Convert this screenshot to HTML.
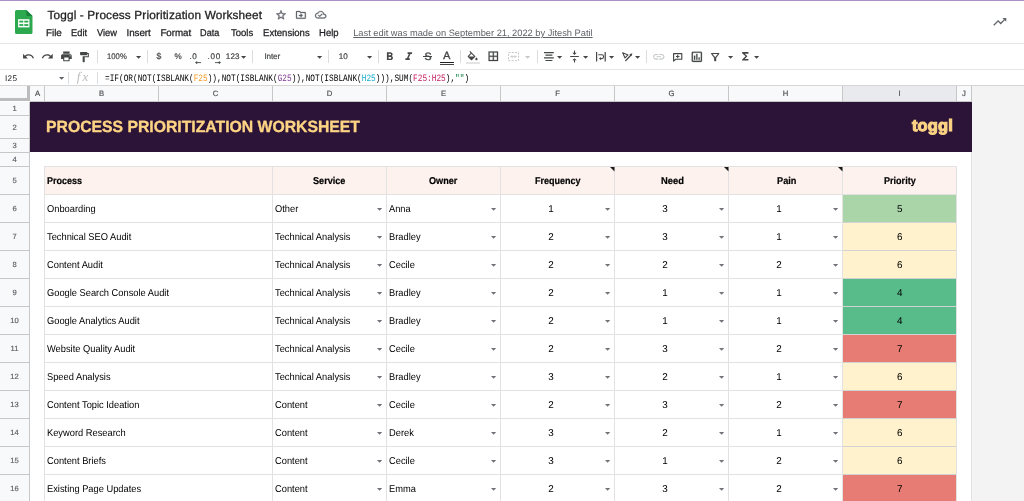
<!DOCTYPE html>
<html><head><meta charset="utf-8"><title>Toggl - Process Prioritization Worksheet</title>
<style>
html,body{margin:0;padding:0}
body{width:1024px;height:501px;overflow:hidden;background:#fff;position:relative;text-rendering:geometricPrecision;font-family:"Liberation Sans",sans-serif;color:#000}
.a{position:absolute}
.t{position:absolute;white-space:nowrap;line-height:1}
.hl{position:absolute;height:1px;background:#e2e2e2}
.vl{position:absolute;width:1px;background:#e2e2e2}
.ch{position:absolute;top:86px;height:15px;font-size:7.7px;color:#50545a;-webkit-text-stroke:0.2px #50545a;text-align:center;line-height:16px}
.rh{position:absolute;left:0;width:29px;font-size:7.6px;color:#5a5e64;-webkit-text-stroke:0.15px #5a5e64;text-align:center}
.c{position:absolute;white-space:nowrap;font-size:9.9px;color:#000;line-height:1;letter-spacing:0px;transform-origin:0 0;transform:scaleX(0.9415)}
.n{text-align:center;transform:none}
.dd{position:absolute;width:0;height:0;border-left:2.6px solid transparent;border-right:2.6px solid transparent;border-top:2.8px solid #444746}
.sep{position:absolute;width:1px;top:50px;height:13px;background:#dadce0}
svg{position:absolute;overflow:visible}
</style></head><body><div id="app" style="position:absolute;left:0;top:0;width:1024px;height:501px;will-change:transform">

<div class="a" style="left:0;top:0;width:1024px;height:1px;background:#a890c5"></div>
<svg style="left:14.6px;top:9.9px" width="17.5" height="24.1" viewBox="0 0 17.5 24.1"><path d="M1.600 0h9.800l6.100 6.100v16.400a1.600 1.600 0 0 1-1.600 1.600H1.600A1.600 1.600 0 0 1 0 22.500V1.600A1.600 1.600 0 0 1 1.600 0z" fill="#2ca94f"/><path d="M11.400 0l6.100 6.100h-4.600a1.500 1.500 0 0 1-1.500-1.500z" fill="#17813a"/><rect x="3.100" y="9.200" width="11.300" height="8.200" fill="#fff"/><rect x="4.300" y="10.700" width="4" height="1.800" fill="#2ca94f"/><rect x="9.300" y="10.700" width="4" height="1.800" fill="#2ca94f"/><rect x="4.300" y="14.100" width="4" height="1.800" fill="#2ca94f"/><rect x="9.300" y="14.100" width="4" height="1.800" fill="#2ca94f"/></svg>
<svg style="left:274.90px;top:9.00px" width="12" height="12" viewBox="0 0 24 24"><path d="M22 9.240l-7.190-.620L12 2 9.190 8.630 2 9.240l5.460 4.730L5.820 21 12 17.270 18.180 21l-1.630-7.030L22 9.240zM12 15.400l-3.760 2.270 1-4.280-3.320-2.880 4.380-.380L12 6.100l1.710 4.040 4.380.380-3.320 2.880 1 4.280L12 15.400z" fill="#5f6368" stroke="#5f6368" stroke-width="0.7"/></svg>
<svg style="left:294.60px;top:9.00px" width="11.8" height="11.8" viewBox="0 0 24 24"><path d="M20 6h-8l-2-2H4c-1.100 0-2 .900-2 2v12c0 1.100.900 2 2 2h16c1.100 0 2-.900 2-2V8c0-1.100-.900-2-2-2zm0 12H4V6h5.170l2 2H20v10zm-7.840-4H8v-2h4.160l-1.590-1.590L11.990 9 16 13.010 11.990 17l-1.410-1.410L12.160 14z" fill="#5f6368" stroke="#5f6368" stroke-width="0.5"/></svg>
<svg style="left:315.20px;top:9.20px" width="11.4" height="11.4" viewBox="0 0 24 24"><path d="M19.350 10.040C18.670 6.590 15.640 4 12 4 9.110 4 6.600 5.640 5.350 8.040 2.340 8.360 0 10.910 0 14c0 3.310 2.690 6 6 6h13c2.760 0 5-2.240 5-5 0-2.640-2.050-4.780-4.650-4.960zM19 18H6c-2.210 0-4-1.790-4-4 0-2.050 1.530-3.760 3.560-3.970l1.070-.110.500-.950C8.080 7.140 9.940 6 12 6c2.620 0 4.880 1.860 5.390 4.430l.300 1.500 1.530.110c1.560.100 2.780 1.410 2.780 2.960 0 1.650-1.350 3-3 3zm-9-3.820l-2.090-2.090L6.500 13.500 10 17l6.010-6.010-1.410-1.410z" fill="#5f6368" stroke="#5f6368" stroke-width="0.5"/></svg>
<svg style="left:991.70px;top:13.95px" width="15.6" height="15.6" viewBox="0 0 24 24"><path d="M16 6l2.290 2.290-4.880 4.880-4-4L2 16.590 3.410 18l6-6 4 4 6.300-6.290L22 12V6z" fill="#5f6368" /></svg>
<div class="hl" style="left:0;top:43px;width:1024px;background:#e4e6e9"></div>
<div class="hl" style="left:0;top:69px;width:1024px;background:#e4e6e9"></div>
<div class="hl" style="left:0;top:85px;width:1024px;background:#d6d6d6"></div>
<svg style="left:21.90px;top:50.20px" width="12.8" height="12.8" viewBox="0 0 24 24"><path d="M12.500 8c-2.650 0-5.050.990-6.900 2.600L2 7v9h9l-3.620-3.620c1.390-1.160 3.160-1.880 5.120-1.880 3.540 0 6.550 2.310 7.600 5.500l2.370-.780C21.080 11.030 17.150 8 12.500 8z" fill="#444746" /></svg>
<svg style="left:41.40px;top:50.20px" width="12.8" height="12.8" viewBox="0 0 24 24"><path d="M18.400 10.600C16.550 8.990 14.150 8 11.500 8c-4.650 0-8.580 3.030-9.960 7.220L3.900 16c1.050-3.190 4.050-5.500 7.600-5.500 1.950 0 3.730.720 5.120 1.880L13 16h9V7l-3.600 3.600z" fill="#444746" /></svg>
<svg style="left:59.50px;top:50.10px" width="12.8" height="12.8" viewBox="0 0 24 24"><path d="M19 8H5c-1.660 0-3 1.340-3 3v6h4v4h12v-4h4v-6c0-1.660-1.340-3-3-3zm-3 11H8v-5h8v5zm3-7c-.550 0-1-.450-1-1s.450-1 1-1 1 .450 1 1-.450 1-1 1zm-1-9H6v4h12V3z" fill="#444746" /></svg>
<svg style="left:78.40px;top:50.50px" width="12.4" height="12.4" viewBox="0 0 24 24"><path d="M18 4V3c0-.550-.450-1-1-1H5c-.550 0-1 .450-1 1v4c0 .550.450 1 1 1h12c.550 0 1-.450 1-1V6h1v4H9v11c0 .550.450 1 1 1h2c.550 0 1-.450 1-1v-9h8V4h-3z" fill="#444746" /></svg>
<svg style="left:383.20px;top:50.40px" width="13.4" height="13.4" viewBox="0 0 24 24"><path d="M15.600 10.790c.970-.670 1.650-1.770 1.650-2.790 0-2.260-1.750-4-4-4H7v14h7.040c2.090 0 3.710-1.700 3.710-3.790 0-1.520-.860-2.820-2.150-3.420zM10 6.500h3c.830 0 1.500.670 1.500 1.500s-.670 1.500-1.500 1.500h-3v-3zm3.500 9H10v-3h3.500c.830 0 1.500.670 1.500 1.500s-.670 1.500-1.500 1.500z" fill="#444746" /></svg>
<svg style="left:402.15px;top:50.40px" width="13.4" height="13.4" viewBox="0 0 24 24"><path d="M10 4v3h2.210l-3.420 8H6v3h8v-3h-2.210l3.420-8H18V4z" fill="#444746" /></svg>
<div class="a" style="left:422.8px;top:56.3px;width:9.4px;height:1.1px;background:#444746"></div>
<div class="a" style="left:440.1px;top:62px;width:14.2px;height:1px;background:#222"></div>
<div class="a" style="left:440.1px;top:63.8px;width:14.2px;height:0.9px;background:#444"></div>
<svg style="left:466.40px;top:50.60px" width="13.2" height="13.2" viewBox="0 0 24 24"><path d="M16.560 8.940L7.620 0 6.210 1.410l2.380 2.380-5.150 5.150c-.590.590-.590 1.540 0 2.120l5.500 5.500c.290.290.680.440 1.060.440s.770-.150 1.060-.440l5.500-5.500c.590-.580.590-1.530 0-2.120zM5.210 10L10 5.210 14.790 10H5.210zM19 11.500s-2 2.170-2 3.500c0 1.100.900 2 2 2s2-.900 2-2c0-1.330-2-3.500-2-3.500z" fill="#444746" /></svg>
<div class="a" style="left:466.2px;top:62.3px;width:13.6px;height:1.6px;background:#fff;border:0.6px solid #e4e4e4;box-sizing:border-box"></div>
<svg style="left:486.60px;top:50.20px" width="12.6" height="12.6" viewBox="0 0 24 24"><path d="M3 3v18h18V3H3zm8 16H5v-6h6v6zm0-8H5V5h6v6zm8 8h-6v-6h6v6zm0-8h-6V5h6v6z" fill="#444746" stroke="#444746" stroke-width="0.5"/></svg>
<svg style="left:507.5px;top:52.1px" width="11" height="9.2" viewBox="0 0 11 9.2"><path d="M0.500 0.500h10v8.200h-10z" fill="none" stroke="#c4c7c5" stroke-width="1" stroke-dasharray="2 1.300"/><path d="M2.200 4.600h2.600M8.800 4.600H6.200M3.800 3.300l1.300 1.300-1.300 1.300M7.200 3.300L5.900 4.600l1.300 1.300" fill="none" stroke="#c4c7c5" stroke-width="0.9"/></svg>
<svg style="left:543.5px;top:52.1px" width="9.8" height="9.2" viewBox="0 0 9.8 9.200"><path d="M0 0.600h9.800M1.400 3.200h7M0 5.900h9.800M1.400 8.500h7" stroke="#444746" stroke-width="1.150" fill="none"/></svg>
<svg style="left:568.00px;top:50.00px" width="13" height="13" viewBox="0 0 24 24"><path d="M8 19h3v4h2v-4h3l-4-4-4 4zm8-14h-3V1h-2v4H8l4 4 4-4zM4 11v2h16v-2H4z" fill="#444746" /></svg>
<svg style="left:595.6px;top:51.8px" width="9.800" height="9.500" viewBox="0 0 9.800 9.500"><path d="M0.600 0v9.500M9.200 0v9.500" stroke="#444746" stroke-width="1.200" fill="none"/><path d="M2.300 2.800h3.400a1.900 1.900 0 0 1 0 3.800H4.200" stroke="#444746" stroke-width="1.100" fill="none"/><path d="M4.900 4.900L2.900 6.600l2 1.700z" fill="#444746"/></svg>
<svg style="left:621.5px;top:51.8px" width="10.600" height="9.200" viewBox="0 0 10.600 9.200"><path d="M0.700 0.800l5.300 2.100-3 3.100z" fill="none" stroke="#444746" stroke-width="1.100" stroke-linejoin="round"/><path d="M3.400 9l5.600-6" stroke="#444746" stroke-width="1.200" fill="none"/><path d="M10.400 1.300L7.300 2.200l2.200 2.100z" fill="#444746"/></svg>
<svg style="left:652.20px;top:50.10px" width="13.6" height="13.6" viewBox="0 0 24 24"><path d="M3.900 12c0-1.710 1.390-3.100 3.100-3.100h4V7H7c-2.760 0-5 2.240-5 5s2.240 5 5 5h4v-1.900H7c-1.710 0-3.100-1.390-3.100-3.100zM8 13h8v-2H8v2zm9-6h-4v1.900h4c1.710 0 3.100 1.390 3.100 3.100s-1.390 3.100-3.100 3.100h-4V17h4c2.760 0 5-2.240 5-5s-2.240-5-5-5z" fill="#c4c7c5" /></svg>
<svg style="left:673px;top:52.6px" width="9.400" height="8.500" viewBox="0 0 9.400 8.500"><path d="M0.600 0.600h8.200v5.700H2.700L0.600 8.100z" fill="none" stroke="#444746" stroke-width="1.150" stroke-linejoin="round"/><path d="M4.700 1.700v3.500M2.950 3.450h3.500" stroke="#444746" stroke-width="1.050" fill="none"/></svg>
<svg style="left:689.60px;top:49.70px" width="13.7" height="13.7" viewBox="0 0 24 24"><path d="M9 17H7v-7h2v7zm4 0h-2V7h2v10zm4 0h-2v-4h2v4zm2 2H5V5h14v14zm0-16H5c-1.100 0-2 .900-2 2v14c0 1.100.900 2 2 2h14c1.100 0 2-.900 2-2V5c0-1.100-.900-2-2-2z" fill="#444746" stroke="#444746" stroke-width="0.4"/></svg>
<svg style="left:709.20px;top:50.50px" width="12.4" height="12.4" viewBox="0 0 24 24"><path d="M7 6h10l-5.010 6.300L7 6zm-2.750-.390C6.270 8.200 10 13 10 13v6c0 .550.450 1 1 1h2c.550 0 1-.450 1-1v-6s3.720-4.800 5.740-7.390c.510-.660.040-1.610-.790-1.610H5.040c-.830 0-1.300.950-.790 1.610z" fill="#444746" /></svg>
<svg style="left:739.00px;top:50.45px" width="12.6" height="12.6" viewBox="0 0 24 24"><path d="M18 4H6v2l6.500 6L6 18v2h12v-3h-7l5-5-5-5h7z" fill="#444746" /></svg>
<div class="sep" style="left:97px"></div>
<div class="sep" style="left:146.6px"></div>
<div class="sep" style="left:252.4px"></div>
<div class="sep" style="left:328.4px"></div>
<div class="sep" style="left:377.5px"></div>
<div class="sep" style="left:460px"></div>
<div class="sep" style="left:536.5px"></div>
<div class="sep" style="left:646.4px"></div>
<svg style="left:135.6px;top:55.5px" width="5.200" height="2.700" viewBox="0 0 5.200 2.700"><path d="M0 0h5.200L2.600 2.700z" fill="#444746"/></svg>
<svg style="left:240.6px;top:55.5px" width="5.200" height="2.700" viewBox="0 0 5.200 2.700"><path d="M0 0h5.200L2.600 2.700z" fill="#444746"/></svg>
<svg style="left:317.0px;top:55.5px" width="5.200" height="2.700" viewBox="0 0 5.200 2.700"><path d="M0 0h5.200L2.600 2.700z" fill="#444746"/></svg>
<svg style="left:366.8px;top:55.5px" width="5.200" height="2.700" viewBox="0 0 5.200 2.700"><path d="M0 0h5.200L2.600 2.700z" fill="#444746"/></svg>
<svg style="left:557.0px;top:55.5px" width="5.200" height="2.700" viewBox="0 0 5.200 2.700"><path d="M0 0h5.200L2.600 2.700z" fill="#444746"/></svg>
<svg style="left:583.3px;top:55.5px" width="5.200" height="2.700" viewBox="0 0 5.200 2.700"><path d="M0 0h5.200L2.600 2.700z" fill="#444746"/></svg>
<svg style="left:608.9px;top:55.5px" width="5.200" height="2.700" viewBox="0 0 5.200 2.700"><path d="M0 0h5.200L2.600 2.700z" fill="#444746"/></svg>
<svg style="left:635.3px;top:55.5px" width="5.200" height="2.700" viewBox="0 0 5.200 2.700"><path d="M0 0h5.200L2.600 2.700z" fill="#444746"/></svg>
<svg style="left:727.9px;top:55.5px" width="5.200" height="2.700" viewBox="0 0 5.200 2.700"><path d="M0 0h5.200L2.600 2.700z" fill="#444746"/></svg>
<svg style="left:754.0px;top:55.5px" width="5.200" height="2.700" viewBox="0 0 5.200 2.700"><path d="M0 0h5.200L2.600 2.700z" fill="#444746"/></svg>
<svg style="left:525.1px;top:55.5px" width="5.200" height="2.700" viewBox="0 0 5.200 2.700"><path d="M0 0h5.200L2.600 2.700z" fill="#c4c7c5"/></svg>
<svg style="left:195.400px;top:60.6px" width="6" height="3.200" viewBox="0 0 6 3.200"><path d="M6 1.600H1.400" stroke="#444746" stroke-width="0.9"/><path d="M0 1.600L2.200 0v3.200z" fill="#444746"/></svg>
<svg style="left:215px;top:60.6px" width="6" height="3.200" viewBox="0 0 6 3.200"><path d="M0 1.600h4.600" stroke="#444746" stroke-width="0.9"/><path d="M6 1.600L3.800 0v3.200z" fill="#444746"/></svg>
<svg style="left:58.9px;top:77.4px" width="5.200" height="2.700" viewBox="0 0 5.200 2.700"><path d="M0 0h5.200L2.600 2.700z" fill="#5f6368"/></svg>
<div class="vl" style="left:68px;top:72px;height:12px;background:#dadce0"></div>
<div class="vl" style="left:97px;top:72px;height:12px;background:#dadce0"></div>
<div class="t" style="left:104.7px;top:74px;font-size:9.8px;color:#000;font-family:'Liberation Mono',monospace;transform-origin:0 0;transform:scaleX(0.7939)">=IF(OR(NOT(ISBLANK(<span style="color:#f7981d">F25</span>)),NOT(ISBLANK(<span style="color:#7e3794">G25</span>)),NOT(ISBLANK(<span style="color:#11a9cc">H25</span>))),SUM(<span style="color:#c2185b">F25:H25</span>),<span style="color:#0b8043">""</span>)</div>
<div class="a" style="left:972px;top:86px;width:52px;height:415px;background:#f3f3f3"></div>
<div class="a" style="left:0;top:86px;width:972px;height:15px;background:#f8f9fa"></div>
<div class="ch" style="left:31px;width:13px;">A</div>
<div class="vl" style="left:44px;top:86px;height:15px;background:#c7c7c7"></div>
<div class="ch" style="left:45px;width:113px;">B</div>
<div class="vl" style="left:158px;top:86px;height:15px;background:#c7c7c7"></div>
<div class="ch" style="left:159px;width:113px;">C</div>
<div class="vl" style="left:272px;top:86px;height:15px;background:#c7c7c7"></div>
<div class="ch" style="left:273px;width:113px;">D</div>
<div class="vl" style="left:386px;top:86px;height:15px;background:#c7c7c7"></div>
<div class="ch" style="left:387px;width:113px;">E</div>
<div class="vl" style="left:500px;top:86px;height:15px;background:#c7c7c7"></div>
<div class="ch" style="left:501px;width:113px;">F</div>
<div class="vl" style="left:614px;top:86px;height:15px;background:#c7c7c7"></div>
<div class="ch" style="left:615px;width:113px;">G</div>
<div class="vl" style="left:728px;top:86px;height:15px;background:#c7c7c7"></div>
<div class="ch" style="left:729px;width:113px;">H</div>
<div class="vl" style="left:842px;top:86px;height:15px;background:#c7c7c7"></div>
<div class="ch" style="left:843px;width:113px;background:#e8eaed;">I</div>
<div class="vl" style="left:956px;top:86px;height:15px;background:#c7c7c7"></div>
<div class="ch" style="left:957px;width:14px;">J</div>
<div class="vl" style="left:971px;top:86px;height:15px;background:#c7c7c7"></div>
<div class="hl" style="left:30px;top:101px;width:942px;background:#c7c7c7"></div>
<div class="a" style="left:0;top:102px;width:29px;height:399px;background:#f8f9fa"></div>
<div class="vl" style="left:29px;top:102px;height:399px;background:#c7c7c7"></div>
<div class="rh" style="top:102px;height:13px;line-height:14px">1</div>
<div class="hl" style="left:0;top:115px;width:29px;background:#c7c7c7"></div>
<div class="rh" style="top:116px;height:22px;line-height:23px">2</div>
<div class="hl" style="left:0;top:138px;width:29px;background:#c7c7c7"></div>
<div class="rh" style="top:139px;height:13px;line-height:14px">3</div>
<div class="hl" style="left:0;top:152px;width:29px;background:#c7c7c7"></div>
<div class="rh" style="top:153px;height:13px;line-height:14px">4</div>
<div class="hl" style="left:0;top:166px;width:29px;background:#c7c7c7"></div>
<div class="rh" style="top:167px;height:27px;line-height:28px">5</div>
<div class="hl" style="left:0;top:194px;width:29px;background:#c7c7c7"></div>
<div class="rh" style="top:195px;height:27px;line-height:28px">6</div>
<div class="hl" style="left:0;top:222px;width:29px;background:#c7c7c7"></div>
<div class="rh" style="top:223px;height:27px;line-height:28px">7</div>
<div class="hl" style="left:0;top:250px;width:29px;background:#c7c7c7"></div>
<div class="rh" style="top:251px;height:27px;line-height:28px">8</div>
<div class="hl" style="left:0;top:278px;width:29px;background:#c7c7c7"></div>
<div class="rh" style="top:279px;height:27px;line-height:28px">9</div>
<div class="hl" style="left:0;top:306px;width:29px;background:#c7c7c7"></div>
<div class="rh" style="top:307px;height:27px;line-height:28px">10</div>
<div class="hl" style="left:0;top:334px;width:29px;background:#c7c7c7"></div>
<div class="rh" style="top:335px;height:27px;line-height:28px">11</div>
<div class="hl" style="left:0;top:362px;width:29px;background:#c7c7c7"></div>
<div class="rh" style="top:363px;height:27px;line-height:28px">12</div>
<div class="hl" style="left:0;top:390px;width:29px;background:#c7c7c7"></div>
<div class="rh" style="top:391px;height:27px;line-height:28px">13</div>
<div class="hl" style="left:0;top:418px;width:29px;background:#c7c7c7"></div>
<div class="rh" style="top:419px;height:27px;line-height:28px">14</div>
<div class="hl" style="left:0;top:446px;width:29px;background:#c7c7c7"></div>
<div class="rh" style="top:447px;height:27px;line-height:28px">15</div>
<div class="hl" style="left:0;top:474px;width:29px;background:#c7c7c7"></div>
<div class="rh" style="top:475px;height:27px;line-height:28px">16</div>
<div class="hl" style="left:0;top:502px;width:29px;background:#c7c7c7"></div>
<div class="a" style="left:27px;top:86px;width:3px;height:15px;background:#bcbcbc"></div>
<div class="a" style="left:0;top:98px;width:30px;height:3px;background:#bcbcbc"></div>
<div class="a" style="left:30px;top:102px;width:942px;height:50px;background:#2c1338"></div>
<div class="vl" style="left:971px;top:152px;height:349px;background:#e2e2e2"></div>
<div class="a" style="left:45px;top:167px;width:912px;height:27px;background:#fef2ee"></div>
<div class="a" style="left:843px;top:195px;width:113px;height:28px;background:#a9d5a9"></div>
<div class="a" style="left:843px;top:223px;width:113px;height:28px;background:#fff2cc"></div>
<div class="a" style="left:843px;top:251px;width:113px;height:28px;background:#fff2cc"></div>
<div class="a" style="left:843px;top:279px;width:113px;height:28px;background:#57bb8a"></div>
<div class="a" style="left:843px;top:307px;width:113px;height:28px;background:#57bb8a"></div>
<div class="a" style="left:843px;top:335px;width:113px;height:28px;background:#e67c73"></div>
<div class="a" style="left:843px;top:363px;width:113px;height:28px;background:#fff2cc"></div>
<div class="a" style="left:843px;top:391px;width:113px;height:28px;background:#e67c73"></div>
<div class="a" style="left:843px;top:419px;width:113px;height:28px;background:#fff2cc"></div>
<div class="a" style="left:843px;top:447px;width:113px;height:28px;background:#fff2cc"></div>
<div class="a" style="left:843px;top:475px;width:113px;height:28px;background:#e67c73"></div>
<div class="hl" style="left:44px;top:166px;width:913px"></div>
<div class="hl" style="left:44px;top:194px;width:913px"></div>
<div class="hl" style="left:44px;top:222px;width:913px"></div>
<div class="hl" style="left:44px;top:250px;width:913px"></div>
<div class="hl" style="left:44px;top:278px;width:913px"></div>
<div class="hl" style="left:44px;top:306px;width:913px"></div>
<div class="hl" style="left:44px;top:334px;width:913px"></div>
<div class="hl" style="left:44px;top:362px;width:913px"></div>
<div class="hl" style="left:44px;top:390px;width:913px"></div>
<div class="hl" style="left:44px;top:418px;width:913px"></div>
<div class="hl" style="left:44px;top:446px;width:913px"></div>
<div class="hl" style="left:44px;top:474px;width:913px"></div>
<div class="vl" style="left:44px;top:166px;height:335px"></div>
<div class="vl" style="left:272px;top:166px;height:335px"></div>
<div class="vl" style="left:386px;top:166px;height:335px"></div>
<div class="vl" style="left:500px;top:166px;height:335px"></div>
<div class="vl" style="left:614px;top:166px;height:335px"></div>
<div class="vl" style="left:728px;top:166px;height:335px"></div>
<div class="vl" style="left:842px;top:166px;height:335px"></div>
<div class="vl" style="left:956px;top:166px;height:335px"></div>
<div class="hl" style="left:843px;top:222px;width:113px;background:rgba(0,0,0,0.07)"></div>
<div class="hl" style="left:843px;top:250px;width:113px;background:rgba(0,0,0,0.07)"></div>
<div class="hl" style="left:843px;top:278px;width:113px;background:rgba(0,0,0,0.07)"></div>
<div class="hl" style="left:843px;top:306px;width:113px;background:rgba(0,0,0,0.07)"></div>
<div class="hl" style="left:843px;top:334px;width:113px;background:rgba(0,0,0,0.07)"></div>
<div class="hl" style="left:843px;top:362px;width:113px;background:rgba(0,0,0,0.07)"></div>
<div class="hl" style="left:843px;top:390px;width:113px;background:rgba(0,0,0,0.07)"></div>
<div class="hl" style="left:843px;top:418px;width:113px;background:rgba(0,0,0,0.07)"></div>
<div class="hl" style="left:843px;top:446px;width:113px;background:rgba(0,0,0,0.07)"></div>
<div class="hl" style="left:843px;top:474px;width:113px;background:rgba(0,0,0,0.07)"></div>
<svg style="left:609.5px;top:166.5px" width="4.500" height="4.500"><path d="M0 0h4.500v4.500z" fill="#1a1a1a"/></svg>
<svg style="left:723.5px;top:166.5px" width="4.500" height="4.500"><path d="M0 0h4.500v4.500z" fill="#1a1a1a"/></svg>
<svg style="left:837.5px;top:166.5px" width="4.500" height="4.500"><path d="M0 0h4.500v4.500z" fill="#1a1a1a"/></svg>
<div class="t" style="left:47.50px;top:10.00px;font-size:11.8px;letter-spacing:0.141px;color:#1f1f1f;-webkit-text-stroke:0.3px currentColor;">Toggl - Process Prioritization Worksheet</div>
<div class="t" style="left:46.00px;top:29.00px;font-size:9.8px;color:#202124;-webkit-text-stroke:0.25px currentColor;">File</div>
<div class="t" style="left:70.70px;top:29.00px;font-size:9.8px;color:#202124;transform-origin:1.00px 0;transform:scaleX(0.9500);-webkit-text-stroke:0.25px currentColor;">Edit</div>
<div class="t" style="left:97.00px;top:29.00px;font-size:9.8px;color:#202124;transform-origin:0.00px 0;transform:scaleX(0.9476);-webkit-text-stroke:0.25px currentColor;">View</div>
<div class="t" style="left:126.50px;top:29.00px;font-size:9.8px;letter-spacing:-0.06px;color:#202124;-webkit-text-stroke:0.25px currentColor;">Insert</div>
<div class="t" style="left:160.40px;top:29.00px;font-size:9.8px;letter-spacing:-0.04px;color:#202124;-webkit-text-stroke:0.25px currentColor;">Format</div>
<div class="t" style="left:200.40px;top:29.00px;font-size:9.8px;color:#202124;transform-origin:1.00px 0;transform:scaleX(0.9300);-webkit-text-stroke:0.25px currentColor;">Data</div>
<div class="t" style="left:231.00px;top:29.00px;font-size:9.8px;color:#202124;transform-origin:0.00px 0;transform:scaleX(0.9696);-webkit-text-stroke:0.25px currentColor;">Tools</div>
<div class="t" style="left:262.75px;top:29.00px;font-size:9.8px;color:#202124;transform-origin:1.00px 0;transform:scaleX(0.9734);-webkit-text-stroke:0.25px currentColor;">Extensions</div>
<div class="t" style="left:318.70px;top:29.00px;font-size:9.8px;color:#202124;transform-origin:1.00px 0;transform:scaleX(0.9684);-webkit-text-stroke:0.25px currentColor;">Help</div>
<div class="t" style="left:353.20px;top:29.00px;font-size:9.3px;letter-spacing:-0.007px;color:#5f6368;text-decoration:underline;text-underline-offset:0.5px;text-decoration-thickness:1px;">Last edit was made on September 21, 2022 by Jitesh Patil</div>
<div class="t" style="left:106.90px;top:53.00px;font-size:8.1px;color:#444746;transform-origin:1.00px 0;transform:scaleX(0.9500);-webkit-text-stroke:0.2px currentColor;">100%</div>
<div class="t" style="left:156.60px;top:52.00px;font-size:8.7px;color:#444746;-webkit-text-stroke:0.2px currentColor;">$</div>
<div class="t" style="left:174.50px;top:53.00px;font-size:8.1px;color:#444746;-webkit-text-stroke:0.2px currentColor;">%</div>
<div class="t" style="left:189.50px;top:53.00px;font-size:8.1px;letter-spacing:0.5px;color:#444746;-webkit-text-stroke:0.2px currentColor;">.0</div>
<div class="t" style="left:207.60px;top:53.00px;font-size:8.1px;letter-spacing:0.65px;color:#444746;-webkit-text-stroke:0.2px currentColor;">.00</div>
<div class="t" style="left:225.75px;top:53.00px;font-size:8.1px;letter-spacing:0.125px;color:#444746;-webkit-text-stroke:0.2px currentColor;">123</div>
<div class="t" style="left:264.40px;top:53.00px;font-size:8.1px;letter-spacing:-0.1px;color:#444746;-webkit-text-stroke:0.2px currentColor;">Inter</div>
<div class="t" style="left:338.75px;top:53.00px;font-size:8.1px;color:#444746;-webkit-text-stroke:0.2px currentColor;">10</div>
<div class="t" style="left:424.60px;top:52.00px;font-size:10.6px;color:#444746;-webkit-text-stroke:0.4px currentColor;">S</div>
<div class="t" style="left:443.25px;top:51.00px;font-size:10.6px;color:#444746;-webkit-text-stroke:0.4px currentColor;">A</div>
<div class="t" style="left:4.90px;top:75.00px;font-size:8.2px;letter-spacing:0.35px;color:#202124;">I25</div>
<div class="t" style="left:76.80px;top:70.00px;font-size:13px;letter-spacing:2.1px;color:#bdbdbd;font-family:'Liberation Serif',serif;font-style:italic;">fx</div>
<div class="t" style="left:46.20px;top:119.00px;font-size:16.2px;color:#fdd484;font-weight:bold;transform-origin:1.00px 0;transform:scaleX(0.9733);-webkit-text-stroke:0.35px #fdd484;">PROCESS PRIORITIZATION WORKSHEET</div>
<div class="t" style="left:911.90px;top:118.00px;font-size:16.5px;letter-spacing:0.15px;color:#fdd484;font-weight:bold;-webkit-text-stroke:1.1px #fdd484;">toggl</div>
<div class="t" style="left:47.00px;top:177.00px;font-size:9.9px;color:#000;font-weight:bold;transform-origin:0.00px 0;transform:scaleX(0.9132);-webkit-text-stroke:0.2px #000;">Process</div>
<div class="t" style="left:313.40px;top:177.00px;font-size:9.9px;color:#000;font-weight:bold;transform-origin:0.00px 0;transform:scaleX(0.9229);-webkit-text-stroke:0.2px #000;">Service</div>
<div class="t" style="left:429.40px;top:177.00px;font-size:9.9px;color:#000;font-weight:bold;transform-origin:0.00px 0;transform:scaleX(0.9226);-webkit-text-stroke:0.2px #000;">Owner</div>
<div class="t" style="left:534.70px;top:177.00px;font-size:9.9px;color:#000;font-weight:bold;transform-origin:0.00px 0;transform:scaleX(0.9140);-webkit-text-stroke:0.2px #000;">Frequency</div>
<div class="t" style="left:660.50px;top:177.00px;font-size:9.9px;color:#000;font-weight:bold;transform-origin:0.00px 0;transform:scaleX(0.9500);-webkit-text-stroke:0.2px #000;">Need</div>
<div class="t" style="left:776.70px;top:177.00px;font-size:9.9px;color:#000;font-weight:bold;transform-origin:0.00px 0;transform:scaleX(0.9300);-webkit-text-stroke:0.2px #000;">Pain</div>
<div class="t" style="left:884.30px;top:177.00px;font-size:9.9px;color:#000;font-weight:bold;transform-origin:0.00px 0;transform:scaleX(0.9176);-webkit-text-stroke:0.2px #000;">Priority</div>
<div class="c" style="left:47.00px;top:205px">Onboarding</div>
<div class="c" style="left:275.20px;top:205px">Other</div>
<div class="c" style="left:388.90px;top:205px">Anna</div>
<div class="c n" style="left:531px;width:40px;top:205px;letter-spacing:0">1</div>
<div class="c n" style="left:645px;width:40px;top:205px;letter-spacing:0">3</div>
<div class="c n" style="left:759px;width:40px;top:205px;letter-spacing:0">1</div>
<div class="c n" style="left:879.8px;width:40px;top:205px;letter-spacing:0">5</div>
<svg style="left:376.9px;top:207.6px" width="5.200" height="2.700" viewBox="0 0 5.200 2.700"><path d="M0 0h5.200L2.600 2.700z" fill="#6f7378"/></svg>
<svg style="left:490.9px;top:207.6px" width="5.200" height="2.700" viewBox="0 0 5.200 2.700"><path d="M0 0h5.200L2.600 2.700z" fill="#6f7378"/></svg>
<svg style="left:604.9px;top:207.6px" width="5.200" height="2.700" viewBox="0 0 5.200 2.700"><path d="M0 0h5.200L2.600 2.700z" fill="#6f7378"/></svg>
<svg style="left:718.9px;top:207.6px" width="5.200" height="2.700" viewBox="0 0 5.200 2.700"><path d="M0 0h5.200L2.600 2.700z" fill="#6f7378"/></svg>
<svg style="left:832.9px;top:207.6px" width="5.200" height="2.700" viewBox="0 0 5.200 2.700"><path d="M0 0h5.200L2.600 2.700z" fill="#6f7378"/></svg>
<div class="c" style="left:47.00px;top:233px">Technical SEO Audit</div>
<div class="c" style="left:275.20px;top:233px">Technical Analysis</div>
<div class="c" style="left:388.90px;top:233px">Bradley</div>
<div class="c n" style="left:531px;width:40px;top:233px;letter-spacing:0">2</div>
<div class="c n" style="left:645px;width:40px;top:233px;letter-spacing:0">3</div>
<div class="c n" style="left:759px;width:40px;top:233px;letter-spacing:0">1</div>
<div class="c n" style="left:879.8px;width:40px;top:233px;letter-spacing:0">6</div>
<svg style="left:376.9px;top:235.6px" width="5.200" height="2.700" viewBox="0 0 5.200 2.700"><path d="M0 0h5.200L2.600 2.700z" fill="#6f7378"/></svg>
<svg style="left:490.9px;top:235.6px" width="5.200" height="2.700" viewBox="0 0 5.200 2.700"><path d="M0 0h5.200L2.600 2.700z" fill="#6f7378"/></svg>
<svg style="left:604.9px;top:235.6px" width="5.200" height="2.700" viewBox="0 0 5.200 2.700"><path d="M0 0h5.200L2.600 2.700z" fill="#6f7378"/></svg>
<svg style="left:718.9px;top:235.6px" width="5.200" height="2.700" viewBox="0 0 5.200 2.700"><path d="M0 0h5.200L2.600 2.700z" fill="#6f7378"/></svg>
<svg style="left:832.9px;top:235.6px" width="5.200" height="2.700" viewBox="0 0 5.200 2.700"><path d="M0 0h5.200L2.600 2.700z" fill="#6f7378"/></svg>
<div class="c" style="left:47.00px;top:261px">Content Audit</div>
<div class="c" style="left:275.20px;top:261px">Technical Analysis</div>
<div class="c" style="left:388.90px;top:261px">Cecile</div>
<div class="c n" style="left:531px;width:40px;top:261px;letter-spacing:0">2</div>
<div class="c n" style="left:645px;width:40px;top:261px;letter-spacing:0">2</div>
<div class="c n" style="left:759px;width:40px;top:261px;letter-spacing:0">2</div>
<div class="c n" style="left:879.8px;width:40px;top:261px;letter-spacing:0">6</div>
<svg style="left:376.9px;top:263.6px" width="5.200" height="2.700" viewBox="0 0 5.200 2.700"><path d="M0 0h5.200L2.600 2.700z" fill="#6f7378"/></svg>
<svg style="left:490.9px;top:263.6px" width="5.200" height="2.700" viewBox="0 0 5.200 2.700"><path d="M0 0h5.200L2.600 2.700z" fill="#6f7378"/></svg>
<svg style="left:604.9px;top:263.6px" width="5.200" height="2.700" viewBox="0 0 5.200 2.700"><path d="M0 0h5.200L2.600 2.700z" fill="#6f7378"/></svg>
<svg style="left:718.9px;top:263.6px" width="5.200" height="2.700" viewBox="0 0 5.200 2.700"><path d="M0 0h5.200L2.600 2.700z" fill="#6f7378"/></svg>
<svg style="left:832.9px;top:263.6px" width="5.200" height="2.700" viewBox="0 0 5.200 2.700"><path d="M0 0h5.200L2.600 2.700z" fill="#6f7378"/></svg>
<div class="c" style="left:47.00px;top:289px">Google Search Console Audit</div>
<div class="c" style="left:275.20px;top:289px">Technical Analysis</div>
<div class="c" style="left:388.90px;top:289px">Bradley</div>
<div class="c n" style="left:531px;width:40px;top:289px;letter-spacing:0">2</div>
<div class="c n" style="left:645px;width:40px;top:289px;letter-spacing:0">1</div>
<div class="c n" style="left:759px;width:40px;top:289px;letter-spacing:0">1</div>
<div class="c n" style="left:879.8px;width:40px;top:289px;letter-spacing:0">4</div>
<svg style="left:376.9px;top:291.6px" width="5.200" height="2.700" viewBox="0 0 5.200 2.700"><path d="M0 0h5.200L2.600 2.700z" fill="#6f7378"/></svg>
<svg style="left:490.9px;top:291.6px" width="5.200" height="2.700" viewBox="0 0 5.200 2.700"><path d="M0 0h5.200L2.600 2.700z" fill="#6f7378"/></svg>
<svg style="left:604.9px;top:291.6px" width="5.200" height="2.700" viewBox="0 0 5.200 2.700"><path d="M0 0h5.200L2.600 2.700z" fill="#6f7378"/></svg>
<svg style="left:718.9px;top:291.6px" width="5.200" height="2.700" viewBox="0 0 5.200 2.700"><path d="M0 0h5.200L2.600 2.700z" fill="#6f7378"/></svg>
<svg style="left:832.9px;top:291.6px" width="5.200" height="2.700" viewBox="0 0 5.200 2.700"><path d="M0 0h5.200L2.600 2.700z" fill="#6f7378"/></svg>
<div class="c" style="left:47.00px;top:317px">Google Analytics Audit</div>
<div class="c" style="left:275.20px;top:317px">Technical Analysis</div>
<div class="c" style="left:388.90px;top:317px">Bradley</div>
<div class="c n" style="left:531px;width:40px;top:317px;letter-spacing:0">2</div>
<div class="c n" style="left:645px;width:40px;top:317px;letter-spacing:0">1</div>
<div class="c n" style="left:759px;width:40px;top:317px;letter-spacing:0">1</div>
<div class="c n" style="left:879.8px;width:40px;top:317px;letter-spacing:0">4</div>
<svg style="left:376.9px;top:319.6px" width="5.200" height="2.700" viewBox="0 0 5.200 2.700"><path d="M0 0h5.200L2.600 2.700z" fill="#6f7378"/></svg>
<svg style="left:490.9px;top:319.6px" width="5.200" height="2.700" viewBox="0 0 5.200 2.700"><path d="M0 0h5.200L2.600 2.700z" fill="#6f7378"/></svg>
<svg style="left:604.9px;top:319.6px" width="5.200" height="2.700" viewBox="0 0 5.200 2.700"><path d="M0 0h5.200L2.600 2.700z" fill="#6f7378"/></svg>
<svg style="left:718.9px;top:319.6px" width="5.200" height="2.700" viewBox="0 0 5.200 2.700"><path d="M0 0h5.200L2.600 2.700z" fill="#6f7378"/></svg>
<svg style="left:832.9px;top:319.6px" width="5.200" height="2.700" viewBox="0 0 5.200 2.700"><path d="M0 0h5.200L2.600 2.700z" fill="#6f7378"/></svg>
<div class="c" style="left:47.00px;top:345px">Website Quality Audit</div>
<div class="c" style="left:275.20px;top:345px">Technical Analysis</div>
<div class="c" style="left:388.90px;top:345px">Cecile</div>
<div class="c n" style="left:531px;width:40px;top:345px;letter-spacing:0">2</div>
<div class="c n" style="left:645px;width:40px;top:345px;letter-spacing:0">3</div>
<div class="c n" style="left:759px;width:40px;top:345px;letter-spacing:0">2</div>
<div class="c n" style="left:879.8px;width:40px;top:345px;letter-spacing:0">7</div>
<svg style="left:376.9px;top:347.6px" width="5.200" height="2.700" viewBox="0 0 5.200 2.700"><path d="M0 0h5.200L2.600 2.700z" fill="#6f7378"/></svg>
<svg style="left:490.9px;top:347.6px" width="5.200" height="2.700" viewBox="0 0 5.200 2.700"><path d="M0 0h5.200L2.600 2.700z" fill="#6f7378"/></svg>
<svg style="left:604.9px;top:347.6px" width="5.200" height="2.700" viewBox="0 0 5.200 2.700"><path d="M0 0h5.200L2.600 2.700z" fill="#6f7378"/></svg>
<svg style="left:718.9px;top:347.6px" width="5.200" height="2.700" viewBox="0 0 5.200 2.700"><path d="M0 0h5.200L2.600 2.700z" fill="#6f7378"/></svg>
<svg style="left:832.9px;top:347.6px" width="5.200" height="2.700" viewBox="0 0 5.200 2.700"><path d="M0 0h5.200L2.600 2.700z" fill="#6f7378"/></svg>
<div class="c" style="left:47.00px;top:373px">Speed Analysis</div>
<div class="c" style="left:275.20px;top:373px">Technical Analysis</div>
<div class="c" style="left:388.90px;top:373px">Bradley</div>
<div class="c n" style="left:531px;width:40px;top:373px;letter-spacing:0">3</div>
<div class="c n" style="left:645px;width:40px;top:373px;letter-spacing:0">2</div>
<div class="c n" style="left:759px;width:40px;top:373px;letter-spacing:0">1</div>
<div class="c n" style="left:879.8px;width:40px;top:373px;letter-spacing:0">6</div>
<svg style="left:376.9px;top:375.6px" width="5.200" height="2.700" viewBox="0 0 5.200 2.700"><path d="M0 0h5.200L2.600 2.700z" fill="#6f7378"/></svg>
<svg style="left:490.9px;top:375.6px" width="5.200" height="2.700" viewBox="0 0 5.200 2.700"><path d="M0 0h5.200L2.600 2.700z" fill="#6f7378"/></svg>
<svg style="left:604.9px;top:375.6px" width="5.200" height="2.700" viewBox="0 0 5.200 2.700"><path d="M0 0h5.200L2.600 2.700z" fill="#6f7378"/></svg>
<svg style="left:718.9px;top:375.6px" width="5.200" height="2.700" viewBox="0 0 5.200 2.700"><path d="M0 0h5.200L2.600 2.700z" fill="#6f7378"/></svg>
<svg style="left:832.9px;top:375.6px" width="5.200" height="2.700" viewBox="0 0 5.200 2.700"><path d="M0 0h5.200L2.600 2.700z" fill="#6f7378"/></svg>
<div class="c" style="left:47.00px;top:401px">Content Topic Ideation</div>
<div class="c" style="left:275.20px;top:401px">Content</div>
<div class="c" style="left:388.90px;top:401px">Cecile</div>
<div class="c n" style="left:531px;width:40px;top:401px;letter-spacing:0">2</div>
<div class="c n" style="left:645px;width:40px;top:401px;letter-spacing:0">3</div>
<div class="c n" style="left:759px;width:40px;top:401px;letter-spacing:0">2</div>
<div class="c n" style="left:879.8px;width:40px;top:401px;letter-spacing:0">7</div>
<svg style="left:376.9px;top:403.6px" width="5.200" height="2.700" viewBox="0 0 5.200 2.700"><path d="M0 0h5.200L2.600 2.700z" fill="#6f7378"/></svg>
<svg style="left:490.9px;top:403.6px" width="5.200" height="2.700" viewBox="0 0 5.200 2.700"><path d="M0 0h5.200L2.600 2.700z" fill="#6f7378"/></svg>
<svg style="left:604.9px;top:403.6px" width="5.200" height="2.700" viewBox="0 0 5.200 2.700"><path d="M0 0h5.200L2.600 2.700z" fill="#6f7378"/></svg>
<svg style="left:718.9px;top:403.6px" width="5.200" height="2.700" viewBox="0 0 5.200 2.700"><path d="M0 0h5.200L2.600 2.700z" fill="#6f7378"/></svg>
<svg style="left:832.9px;top:403.6px" width="5.200" height="2.700" viewBox="0 0 5.200 2.700"><path d="M0 0h5.200L2.600 2.700z" fill="#6f7378"/></svg>
<div class="c" style="left:47.00px;top:429px">Keyword Research</div>
<div class="c" style="left:275.20px;top:429px">Content</div>
<div class="c" style="left:388.90px;top:429px">Derek</div>
<div class="c n" style="left:531px;width:40px;top:429px;letter-spacing:0">3</div>
<div class="c n" style="left:645px;width:40px;top:429px;letter-spacing:0">2</div>
<div class="c n" style="left:759px;width:40px;top:429px;letter-spacing:0">1</div>
<div class="c n" style="left:879.8px;width:40px;top:429px;letter-spacing:0">6</div>
<svg style="left:376.9px;top:431.6px" width="5.200" height="2.700" viewBox="0 0 5.200 2.700"><path d="M0 0h5.200L2.600 2.700z" fill="#6f7378"/></svg>
<svg style="left:490.9px;top:431.6px" width="5.200" height="2.700" viewBox="0 0 5.200 2.700"><path d="M0 0h5.200L2.600 2.700z" fill="#6f7378"/></svg>
<svg style="left:604.9px;top:431.6px" width="5.200" height="2.700" viewBox="0 0 5.200 2.700"><path d="M0 0h5.200L2.600 2.700z" fill="#6f7378"/></svg>
<svg style="left:718.9px;top:431.6px" width="5.200" height="2.700" viewBox="0 0 5.200 2.700"><path d="M0 0h5.200L2.600 2.700z" fill="#6f7378"/></svg>
<svg style="left:832.9px;top:431.6px" width="5.200" height="2.700" viewBox="0 0 5.200 2.700"><path d="M0 0h5.200L2.600 2.700z" fill="#6f7378"/></svg>
<div class="c" style="left:47.00px;top:457px">Content Briefs</div>
<div class="c" style="left:275.20px;top:457px">Content</div>
<div class="c" style="left:388.90px;top:457px">Cecile</div>
<div class="c n" style="left:531px;width:40px;top:457px;letter-spacing:0">3</div>
<div class="c n" style="left:645px;width:40px;top:457px;letter-spacing:0">1</div>
<div class="c n" style="left:759px;width:40px;top:457px;letter-spacing:0">2</div>
<div class="c n" style="left:879.8px;width:40px;top:457px;letter-spacing:0">6</div>
<svg style="left:376.9px;top:459.6px" width="5.200" height="2.700" viewBox="0 0 5.200 2.700"><path d="M0 0h5.200L2.600 2.700z" fill="#6f7378"/></svg>
<svg style="left:490.9px;top:459.6px" width="5.200" height="2.700" viewBox="0 0 5.200 2.700"><path d="M0 0h5.200L2.600 2.700z" fill="#6f7378"/></svg>
<svg style="left:604.9px;top:459.6px" width="5.200" height="2.700" viewBox="0 0 5.200 2.700"><path d="M0 0h5.200L2.600 2.700z" fill="#6f7378"/></svg>
<svg style="left:718.9px;top:459.6px" width="5.200" height="2.700" viewBox="0 0 5.200 2.700"><path d="M0 0h5.200L2.600 2.700z" fill="#6f7378"/></svg>
<svg style="left:832.9px;top:459.6px" width="5.200" height="2.700" viewBox="0 0 5.200 2.700"><path d="M0 0h5.200L2.600 2.700z" fill="#6f7378"/></svg>
<div class="c" style="left:47.00px;top:485px">Existing Page Updates</div>
<div class="c" style="left:275.20px;top:485px">Content</div>
<div class="c" style="left:388.90px;top:485px">Emma</div>
<div class="c n" style="left:531px;width:40px;top:485px;letter-spacing:0">2</div>
<div class="c n" style="left:645px;width:40px;top:485px;letter-spacing:0">3</div>
<div class="c n" style="left:759px;width:40px;top:485px;letter-spacing:0">2</div>
<div class="c n" style="left:879.8px;width:40px;top:485px;letter-spacing:0">7</div>
<svg style="left:376.9px;top:487.6px" width="5.200" height="2.700" viewBox="0 0 5.200 2.700"><path d="M0 0h5.200L2.600 2.700z" fill="#6f7378"/></svg>
<svg style="left:490.9px;top:487.6px" width="5.200" height="2.700" viewBox="0 0 5.200 2.700"><path d="M0 0h5.200L2.600 2.700z" fill="#6f7378"/></svg>
<svg style="left:604.9px;top:487.6px" width="5.200" height="2.700" viewBox="0 0 5.200 2.700"><path d="M0 0h5.200L2.600 2.700z" fill="#6f7378"/></svg>
<svg style="left:718.9px;top:487.6px" width="5.200" height="2.700" viewBox="0 0 5.200 2.700"><path d="M0 0h5.200L2.600 2.700z" fill="#6f7378"/></svg>
<svg style="left:832.9px;top:487.6px" width="5.200" height="2.700" viewBox="0 0 5.200 2.700"><path d="M0 0h5.200L2.600 2.700z" fill="#6f7378"/></svg>
</div></body></html>
